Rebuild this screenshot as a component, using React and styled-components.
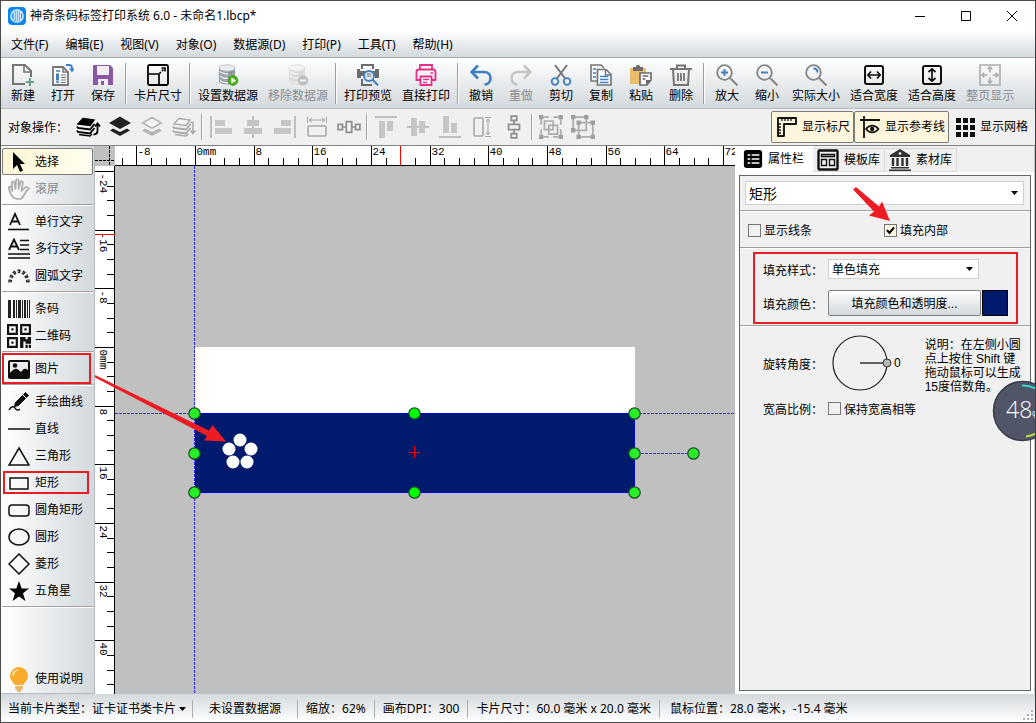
import React, { useLayoutEffect, useRef, useState } from "react";
import styled, { createGlobalStyle } from "styled-components";

const GlobalStyle = createGlobalStyle`
  * { box-sizing: border-box; }
  body {
    margin: 0;
    overflow: hidden;
    background: #5c5c5c;
    font-family: "Noto Sans", "Noto Sans CJK SC", sans-serif;
    font-size: 12px;
    line-height: 16px;
    color: #000;
  }
  button, select, input {
    font-family: inherit;
    font-size: inherit;
    line-height: inherit;
    color: inherit;
  }
`;

const BLUE = "#3f7fbf";
const GREY = "#757575";
const NAVY = "#001b6e";
const RED = "#ed1c24";

// ---------- icons, drawn on a 22 unit grid ----------

const Icon = ({ size = 22, children }) => (
  <svg width={size} height={size} viewBox="0 0 22 22" fill="none" aria-hidden="true">
    {children}
  </svg>
);

const NewIcon = () => (
  <Icon>
    <path d="M13 20H1V1h12l6 6v6" stroke={GREY} strokeWidth="2" />
    <path d="M12 1v7h7" stroke={GREY} strokeWidth="1.6" />
    <path d="M18 14v8M14 18h8" stroke="#6a9f88" strokeWidth="2" />
  </Icon>
);

const OpenIcon = () => (
  <Icon>
    <path d="M1 3h10l5 5v13H1z" fill="#fff" stroke={GREY} strokeWidth="1.8" />
    <path d="M11 3v5h5" stroke={GREY} strokeWidth="1.5" />
    <path d="M4 7h4M4 18h3" stroke={BLUE} strokeWidth="1.5" />
    <path d="M4 9.5h3v7H4z" fill={BLUE} />
    <path d="M9 11h5M9 13.5h5M9 16h5M9 18.5h5" stroke={GREY} strokeWidth="1.2" />
    <path d="M14 1h3c2 0 3 1 3 3v2" stroke={BLUE} strokeWidth="1.8" />
    <path d="M17 4.5h5.5L20 8.5z" fill={BLUE} />
  </Icon>
);

const SaveIcon = () => (
  <Icon>
    <path d="M1 1h17l3 3v17H1z" fill="#8858a0" />
    <path d="M5 2h12v9H5zM6 15h10v6H6z" fill="#f3eef6" />
    <path d="M9 17h3v4H9z" fill="#8858a0" />
  </Icon>
);

const CardSizeIcon = () => (
  <Icon>
    <rect x="1" y="1" width="20" height="20" rx="1.5" stroke="#000" strokeWidth="1.8" />
    <path d="M1 10h11v11" stroke="#000" strokeWidth="1.7" />
    <path d="M12.5 9.500l5-5" stroke="#000" strokeWidth="1.6" strokeDasharray="2 1.4" />
    <path d="M14.5 4h3.500v3.500" stroke="#000" strokeWidth="1.6" />
  </Icon>
);

const DatabaseIcon = ({ remove }) => (
  <Icon>
    <g opacity={remove ? 0.4 : 1}>
      {[13, 8.5, 4].map((y) => (
        <g key={y}>
          <path d={`M2 ${y}v4c0 4.5 16 4.5 16 0v-4`} fill={remove ? "#b8b8b8" : "#8d969d"} />
          <ellipse cx="10" cy={y} rx="8" ry="3.2" fill="#e9edef" stroke="#b0b7bc" strokeWidth=".8" />
        </g>
      ))}
      <path d="M3 7.5c2 2 5 2.6 8 2M3 12c2 2 5 2.6 8 2M3 16.5c2 2 5 2.6 8 2" stroke="#f4f6f7" strokeWidth="1.3" />
      <circle cx="16" cy="16.5" r="5" fill={remove ? "#777" : "#4fae1d"} stroke={remove ? "#999" : "#3b8913"} strokeWidth=".6" />
      {remove ? (
        <path d="M13 16.5h6" stroke="#fff" strokeWidth="2" />
      ) : (
        <path d="M14.4 13.6l4.8 2.9-4.8 2.9z" fill="#fff" />
      )}
    </g>
  </Icon>
);

const PreviewIcon = () => (
  <Icon>
    <path d="M5 5V1h11v4" stroke="#6b6b6b" strokeWidth="2" />
    <path d="M0 5h3v2h15V5h4v9h-4v-2H4v2H0z" fill="#6b6b6b" />
    <path d="M5 15v6h10" stroke="#6b6b6b" strokeWidth="2" />
    <circle cx="12" cy="12" r="5" fill="#dfe9f2" stroke={BLUE} strokeWidth="1.8" />
    <path d="M9.5 12h5M10 10h4" stroke={GREY} strokeWidth="1.2" />
    <path d="M15.6 15.8l5.4 5.4" stroke={BLUE} strokeWidth="2" />
  </Icon>
);

const PrintIcon = () => (
  <Icon>
    <g stroke="#e62e86" strokeWidth="1.8">
      <path d="M5 5.5V1h12v4.5" />
      <path d="M5 16H1.5V8c0-1.5 1-2.5 2.5-2.5h14c1.500 0 2.5 1 2.5 2.5v8H17" />
      <path d="M5.5 12.5h11V21h-11z" fill="#fff" />
      <path d="M8 15.5h6M8 18.5h4M15.5 9H18" strokeWidth="1.5" />
    </g>
  </Icon>
);

const UndoIcon = ({ redo }) => (
  <Icon>
    <g transform={redo ? "translate(22 0) scale(-1 1)" : undefined}>
      <path
        d="M8 1.5L1.5 8 8 14.5M2 8h12c4.5 0 6.5 2.8 6.5 6s-2 6.5-6 6.5"
        stroke={redo ? "#c3c6c8" : BLUE}
        strokeWidth="2.6"
      />
    </g>
  </Icon>
);

const CutIcon = () => (
  <Icon>
    <path d="M5 1l10.5 14M17 1L6.5 15" stroke={GREY} strokeWidth="2" />
    <circle cx="5" cy="17.5" r="3.3" stroke={BLUE} strokeWidth="1.8" />
    <circle cx="17" cy="17.5" r="3.3" stroke={BLUE} strokeWidth="1.8" />
  </Icon>
);

const CopyIcon = () => (
  <Icon>
    <path d="M7 17H1V1h10l3 3" stroke={GREY} strokeWidth="1.6" />
    <path d="M3 5h3M3 9h3M3 13h3" stroke={BLUE} strokeWidth="1.5" />
    <path d="M7.5 5.5H16l5 5V21H7.500z" fill="#fff" stroke={GREY} strokeWidth="1.7" />
    <path d="M15.5 6v5H21" stroke={GREY} strokeWidth="1.5" />
    <path d="M10 12.5h8.5M10 15.5h8.5M10 18.5h8.5" stroke={BLUE} strokeWidth="1.4" />
  </Icon>
);

const PasteIcon = () => (
  <Icon>
    <path d="M0 4h16v16H0z" fill="#e9bd6a" />
    <path d="M3 7V3h3c0-3 4-3 4 0h3v4z" fill="#6b6b6b" />
    <path d="M10 9h11v7l-4 5h-7z" fill="#fff" stroke="#6b6b6b" strokeWidth="1.7" />
    <path d="M12.5 12h6M12.5 15h3" stroke="#6b6b6b" strokeWidth="1.5" />
    <path d="M16 21v-5h5z" fill="#6b6b6b" />
  </Icon>
);

const DeleteIcon = () => (
  <Icon>
    <g stroke={GREY} strokeWidth="2">
      <path d="M0 5h22M7 5V1.5h8V5M3 5l1 16h14l1-16" />
      <path d="M8 9v8M11 9v8M14 9v8" strokeWidth="1.8" />
    </g>
  </Icon>
);

const ZoomIcon = ({ kind }) => (
  <Icon>
    <circle cx="8.5" cy="8.5" r="7.3" stroke="#858585" strokeWidth="1.8" />
    <path d="M14 14l7.5 7.5" stroke="#858585" strokeWidth="2" />
    {kind === "in" && <path d="M8.5 5v7M5 8.5h7" stroke={BLUE} strokeWidth="2" />}
    {kind === "out" && <path d="M5 8.5h7" stroke={BLUE} strokeWidth="2" />}
    {kind === "actual" && <path d="M8.5 4.5c2.5 0 4 1.800 4 4" stroke={BLUE} strokeWidth="2" />}
  </Icon>
);

const FitIcon = ({ tall }) => (
  <Icon>
    <rect x="2" y="2" width="18" height="18" rx="2" stroke="#111" strokeWidth="2" />
    <path
      d="M5 11h12M8 7.5L4.8 11 8 14.5M14 7.5l3.2 3.5-3.2 3.5"
      stroke="#111"
      strokeWidth="1.7"
      transform={tall ? "rotate(90 11 11)" : undefined}
    />
  </Icon>
);

const FullPageIcon = () => (
  <Icon>
    <g stroke="#a9adb0" strokeWidth="1.6">
      <path d="M1 1h20v20H1z" />
      {[0, 90, 180, 270].map((a) => (
        <path key={a} d="M11 8.5V3M8.800 5.200L11 3l2.200 2.200" transform={`rotate(${a} 11 11)`} />
      ))}
    </g>
  </Icon>
);

const Sheets = ({ top, bottom, children }) => (
  <Icon>
    <path d="M1 14.5l10 5.5 10-5.5-3-2-7 3.6-7-3.6z" fill={bottom} />
    <path d="M11 1.5L20.5 7 11 12.2 1.5 7z" fill={top} stroke={bottom} strokeWidth="1.6" />
    {children}
  </Icon>
);

const StackIcon = ({ color, down }) => (
  <svg width="26" height="22" viewBox="0 0 26 22" fill="none" aria-hidden="true">
    <path d="M8 2.5l11 1.5-4 5.500L3 8z" fill={down ? "#f4f4f4" : color} stroke={color} strokeWidth="1.5" />
    <path d="M2 10.500l1 1.500 12 1.500 4.500-5.500M2 14.500l1 1.500 12 1.500 4.500-5.500" stroke={color} strokeWidth="1.8" />
    <path d="M4 18.500l11 1.500 2-2" stroke={color} strokeWidth="1.4" />
    {down ? (
      <path d="M19.500 6.500h2.500V17M19.500 14.500l2.500 3 2.500-3" stroke={color} strokeWidth="1.6" />
    ) : (
      <path d="M18.500 18.500c3 0 4-1 4-4V8M20 10.500l2.500-3 2.500 3" stroke={color} strokeWidth="1.8" />
    )}
  </svg>
);

const AlignShape = ({ kind }) => {
  const shapes = {
    left: <path d="M5 4h10v6H5zM5 12h17v6H5z" />,
    center: <path d="M5 4h12v6H5zM2 12h18v6H2z" />,
    right: <path d="M7 4h10v6H7zM0 12h17v6H0z" />,
  };
  const line = { left: 1, center: 11, right: 21 };
  return (
    <>
      <path d={`M${line[kind]} 0v22`} stroke="#b9b9b9" strokeWidth="1.8" />
      <g fill="#c6c6c6">{shapes[kind]}</g>
    </>
  );
};

const AlignH = ({ kind }) => (
  <Icon>
    <AlignShape kind={kind} />
  </Icon>
);

// mirrored on the diagonal: left becomes top, long bar first
const AlignV = ({ kind }) => (
  <Icon>
    <g transform="matrix(0 1 -1 0 22 0)">
      <AlignShape kind={kind} />
    </g>
  </Icon>
);

const SameSizeIcon = ({ tall }) => (
  <Icon>
    <g stroke="#a8a8a8" strokeWidth="1.6" transform={tall ? "matrix(0 1 1 0 0 0)" : undefined}>
      <rect x="2" y={tall ? 3 : 10} width="18" height={tall ? 9 : 10} rx="1" />
      <path
        d="M3 4h16M6 2L3 4l3 2M16 2l3 2-3 2M1.500 1v6M20.500 1v6"
        strokeWidth="1"
        transform={tall ? "translate(0 13)" : undefined}
      />
    </g>
  </Icon>
);

const SpreadIcon = ({ tall }) => (
  <Icon size={24}>
    <g stroke="#8f8f8f" strokeWidth="1.6" transform={tall ? "rotate(90 11 11)" : undefined}>
      <path d="M1 8.5h4v5H1zM8.5 6h5v10h-5zM17 8.5h4v5h-4zM5 11h3.5M13.5 11H17" />
    </g>
  </Icon>
);

const GroupIcon = ({ ungroup }) => (
  <Icon size={24}>
    <g stroke="#adadad" strokeWidth="1.6">
      {ungroup ? (
        <path d="M2 2h12v12H2zM7 7h13v13H7z" />
      ) : (
        <path d="M4 2h5M13 2h5M4 20h5M13 20h5M2 4v5M2 13v5M20 4v5M20 13v5M5 5.500h8v8H5zM9 9.500h8v8H9z" />
      )}
    </g>
    <g fill="#9f9f9f">
      {ungroup ? (
        <path d="M0 0h4v4H0zM12 0h4v4h-4zM0 12h4v4H0zM5 5h4v4H5zM18 5h4v4h-4zM5 18h4v4H5zM18 18h4v4h-4z" />
      ) : (
        <path d="M0 0h4v4H0zM18 0h4v4h-4zM0 18h4v4H0zM18 18h4v4h-4z" />
      )}
    </g>
  </Icon>
);

const RulerIcon = () => (
  <Icon>
    <path d="M2 2h18v6H8v12H2z" stroke="#111" strokeWidth="1.9" strokeLinejoin="round" />
    <path d="M6 2v3M9 2v3M12 2v3M15 2v3M2 8h3M2 11h3M2 14h3M2 17h3" stroke="#111" strokeWidth="1.3" />
  </Icon>
);

const GuideIcon = () => (
  <Icon>
    <path d="M1 4h20M5 0v22" stroke="#111" strokeWidth="1.8" />
    <path d="M7 13c3.5-4.5 9-4.5 12.5 0-3.5 4.5-9 4.5-12.5 0z" stroke="#111" strokeWidth="1.7" />
    <circle cx="13.2" cy="13" r="2.2" fill="#111" />
  </Icon>
);

const GridIcon = () => (
  <Icon>
    <path
      d="M2 2h5v5H2zM9 2h5v5H9zM16 2h5v5h-5zM2 9h5v5H2zM9 9h5v5H9zM16 9h5v5h-5zM2 16h5v5H2zM9 16h5v5H9zM16 16h5v5h-5z"
      fill="#111"
    />
  </Icon>
);

const CursorIcon = () => (
  <Icon>
    <path d="M5 1v17l4-4 3 7 3-1.5-3-6.500h5z" fill="#000" />
  </Icon>
);

const HandIcon = () => (
  <Icon>
    <path
      d="M6 20C3 17.5 1.5 14 .8 9.5c.8-1.3 2-1 2.5.5L4.5 13 3.8 4.5c.3-1.6 2.2-1.6 2.5 0L7.5 11 8 2.500c.3-1.700 2.300-1.700 2.600 0V11l1.800-7c.5-1.500 2.400-1.200 2.400.5L13.500 13l3.500-3.500c1.500-.8 3 0 4 1-3 2-4 5-5.500 7.500-1 2-2 3-4.500 3s-3.500 0-5-1z"
      stroke="#a9adb0"
      strokeWidth="1.7"
      strokeLinejoin="round"
    />
  </Icon>
);

const TextIcon = ({ multi }) => (
  <Icon>
    <path
      d={multi ? "M1 12L6 1.5 11 12M3 8.5h6" : "M2 14L7 3l5 11M4 10.500h6"}
      stroke="#111"
      strokeWidth="1.8"
    />
    <path
      d={multi ? "M12 2.5h9M12 7h9M12 11.5h9M0 16h22M0 20h22" : "M0 18.5h21"}
      stroke="#111"
      strokeWidth="1.6"
    />
  </Icon>
);

const ArcTextIcon = () => (
  <Icon>
    <path d="M2 17.500C3 2.500 19 2.500 20 17.500" stroke="#222" strokeWidth="3.6" strokeDasharray="2.800 2" />
    <path d="M2 17.500C3 2.500 19 2.500 20 17.500" stroke="#e4e8ea" strokeWidth="1" strokeDasharray="1.200 3.600" />
  </Icon>
);

const BarcodeIcon = () => (
  <Icon>
    <path
      d="M0 2h3v18H0zM5 2h2v18H5zM8 2h1v18H8zM10 2h3v18h-3zM14 2h1v18h-1zM16 2h2v18h-2zM19 2h1v18h-1zM21 2h1v18h-1z"
      fill="#222"
    />
  </Icon>
);

const QrIcon = () => (
  <Icon size={24}>
    <path d="M1 1h8v8H1zM13 1h8v8h-8zM1 13h8v8H1z" stroke="#111" strokeWidth="2" />
    <path
      d="M4 4h2v2H4zM16 4h2v2h-2zM4 16h2v2H4zM12 12h5v2h2v-2h3v6h-5v-2h-2v6h-3zM17 19h2v3h-2zM20 19h2v3h-2z"
      fill="#111"
    />
  </Icon>
);

const PictureIcon = () => (
  <Icon>
    <rect x="0" y="2" width="22" height="19" rx="2" fill="#0d0d0d" />
    <path d="M2 4h18v8c-4-3-5 0-7 2-2-1-3-4-6-3-2 .5-3 2-5 4z" fill="#e9ebec" />
    <circle cx="7" cy="7.5" r="2.3" fill="#0d0d0d" />
  </Icon>
);

const PenIcon = () => (
  <Icon>
    <path d="M17.5 1.500l3 3-2 2-3-3zM14.500 4.500l3 3-7 7-4 1 1-4z" fill="#111" stroke="#111" />
    <path d="M1 19c2-4 5-4 6-2s3 3 5 1" stroke="#111" strokeWidth="1.5" />
  </Icon>
);

const Outline = ({ d }) => (
  <Icon>
    <path d={d} stroke="#111" strokeWidth="1.5" />
  </Icon>
);

const StarIcon = () => (
  <Icon>
    <path d="M11 1l2.7 7.5H21l-6 4.7 2.4 7.8L11 16.4 4.6 21 7 13.2 1 8.5h7.3z" fill="#000" />
  </Icon>
);

const BulbIcon = () => (
  <svg width="22" height="26" viewBox="0 0 22 26" fill="none" aria-hidden="true">
    <path d="M11 1a9 9 0 0 0-9 9c0 4 3 6 5 9h8c2-3 5-5 5-9a9 9 0 0 0-9-9z" fill="#f9ac2b" />
    <path d="M5 10c0-3 2-5.5 5-6" stroke="#fff" strokeWidth="1.2" />
    <path d="M7 21h8M7.5 23h7M9 25h4" stroke="#e9a23a" strokeWidth="1.5" />
  </svg>
);

const PropsIcon = () => (
  <Icon size={20}>
    <rect x="1" y="1" width="20" height="20" rx="3" fill="#000" />
    <path d="M5 6.5h3M5 11h3M5 15.5h3M9.5 6.5H18M9.5 11H18M9.5 15.5H18" stroke="#fff" strokeWidth="1.7" />
  </Icon>
);

const TemplateIcon = () => (
  <Icon>
    <rect x="1.5" y="1.5" width="19" height="19" rx="1" stroke="#111" strokeWidth="2.4" />
    <path d="M4.5 5.5h13v2h-13zM4.5 10.5h5v6h-5zM12.5 10.5h5v6h-5z" stroke="#111" strokeWidth="1.4" />
  </Icon>
);

const LibraryIcon = () => (
  <Icon>
    <path d="M11 0l10 6v2H1V6zM2 18h18v1.5H2zM0 20.5h22V22H0z" fill="#333" />
    <path d="M4 9v8M8.5 9v8M13.5 9v8M18 9v8" stroke="#333" strokeWidth="2.4" />
    <circle cx="11" cy="4.5" r="1.3" fill="#fff" />
  </Icon>
);

// ---------- layout pieces ----------

const Window = styled.div`
  position: relative;
  display: flex;
  flex-direction: column;
  height: 100vh;
  overflow: hidden;
  border: 1px solid #4a4d48;
  border-right-color: #3a3c38;
  background: #f0f0f0;
`;

const TitleBar = styled.header`
  display: flex;
  align-items: center;
  height: 30px;
  flex: none;
  padding-left: 7px;
  background: #fff;
`;

const Title = styled.h1`
  flex: 1;
  margin: 0 0 0 4px;
  font-size: 12px;
  font-weight: 400;
  white-space: nowrap;
`;

const WindowButton = styled.button`
  display: flex;
  align-items: center;
  justify-content: center;
  width: 46px;
  height: 28px;
  border: 0;
  padding: 0;
  background: none;
`;

const MenuBar = styled.nav`
  display: flex;
  flex: none;
  height: 27px;
  border-bottom: 1px solid #a6abae;
  background: linear-gradient(#fff, #d3d9dd);
`;

const MenuButton = styled.button`
  border: 0;
  padding: 2px 7px 0 10px;
  background: none;
  white-space: nowrap;
`;

const ToolBar = styled.div`
  display: flex;
  flex: none;
  height: 51px;
  padding-left: 2px;
  border-bottom: 1px solid #b6babd;
  background: linear-gradient(#fff, #d3d9dd);
`;

const ToolButton = styled.button`
  display: flex;
  flex-direction: column;
  align-items: center;
  flex: none;
  gap: 2px;
  min-width: 40px;
  border: 0;
  padding: 6px 5px 0;
  background: none;
  white-space: nowrap;

  &:disabled {
    color: #8a8d8f;
  }
`;

const Divider = styled.span`
  flex: none;
  width: 2px;
  margin: ${(p) => p.$margin};
  border-left: 1px solid #a0a0a0;
  border-right: 1px solid #fff;
`;

const ObjectBar = styled.div`
  display: flex;
  flex: none;
  height: 37px;
  padding-left: 7px;
  border-bottom: 1px solid #828282;
`;

const BarLabel = styled.span`
  align-self: center;
  width: 64px;
  padding-top: 2px;
  white-space: nowrap;
`;

const ObjectButton = styled.button`
  display: flex;
  align-items: center;
  justify-content: center;
  width: 32px;
  border: 0;
  padding: 0;
  background: none;
`;

const ViewToggles = styled.div`
  display: flex;
  margin-left: auto;
  padding: 2px 3px 2px 0;
`;

const ToggleButton = styled.button`
  display: flex;
  align-items: center;
  gap: 4px;
  height: 32px;
  border: 1px solid ${(p) => (p.$on ? "#7b7b78" : "transparent")};
  border-radius: 2px;
  padding: 0 3px 0 4px;
  background: ${(p) => (p.$on ? "#fdf6dc" : "none")};
  white-space: nowrap;
`;

const Body = styled.main`
  display: flex;
  flex: 1;
  min-height: 0;
`;

const SideTools = styled.aside`
  display: flex;
  flex-direction: column;
  flex: none;
  width: 94px;
  padding: 2px 1px 1px 1px;
  border-right: 1px solid #b6babd;
  border-bottom: 1px solid #b6babd;
  background: linear-gradient(90deg, #fff, #d3d9dd);
`;

const SideButton = styled.button`
  position: relative;
  display: flex;
  align-items: center;
  gap: 4px;
  flex: none;
  height: 27px;
  border: 1px solid ${(p) => (p.$on ? "#7b7b78" : "transparent")};
  border-radius: 2px;
  padding: 0 0 0 4px;
  background: ${(p) => (p.$on ? "linear-gradient(90deg, #fef6d4, #fffdf0)" : "none")};
  white-space: nowrap;

  &:disabled {
    color: #8a8d8f;
  }
`;

const IconSlot = styled.span`
  display: flex;
  justify-content: center;
  width: 24px;
`;

const SideDivider = styled.span`
  flex: none;
  height: 2px;
  margin: 2px 0;
  border-top: 1px solid #a0a0a0;
  border-bottom: 1px solid #fff;
`;

const Spacer = styled.div`
  flex: 1;
`;

const Marker = styled.span`
  position: absolute;
  inset: ${(p) => p.$inset};
  border: 2px solid ${RED};
  pointer-events: none;
`;

const Stage = styled.section`
  display: grid;
  grid-template: 20px 1fr / 20px 1fr;
  flex: 1;
  min-width: 0;
  overflow: hidden;
  background: #c0c0c0;
`;

const RulerSvg = styled.svg`
  display: block;
  width: 100%;
  height: 100%;
  background: ${(p) => p.$bg || "#fff"};
  font-family: "Liberation Mono", monospace;
  font-size: 11px;
`;

const Board = styled.div`
  position: relative;
  overflow: hidden;
`;

const BoardDrawing = styled.svg`
  position: absolute;
  inset: 0;
  width: 100%;
  height: 100%;
`;

const SidePanel = styled.aside`
  display: flex;
  flex-direction: column;
  flex: none;
  width: 300px;
  padding: 0 3px 3px 4px;
  border-right: 1px solid #c4c4c4;
  background: #fff;
`;

const Tabs = styled.div`
  display: flex;
  align-items: flex-end;
  margin: 0 -3px 0 -4px;
  height: 26px;
  flex: none;
  background: #f0f0f0;
`;

const Tab = styled.button`
  display: flex;
  align-items: center;
  gap: 5px;
  height: ${(p) => (p.$on ? 26 : 24)}px;
  border: solid #d9d9d9;
  border-width: ${(p) => (p.$on ? "0" : "1px 1px 1px 0")};
  padding: 0 ${(p) => (p.$on ? 9 : 4)}px 0 ${(p) => (p.$on ? 8 : 4)}px;
  background: ${(p) => (p.$on ? "#fff" : "#f0f0f0")};
  white-space: nowrap;
`;

const Properties = styled.div`
  flex: 1;
  margin-top: 3px;
  border: 1px solid #666;
  background: #f0f0f0;
  font-family: "Liberation Sans", "Noto Sans CJK SC", sans-serif;
`;

const Section = styled.section`
  position: relative;
  display: grid;
  gap: ${(p) => p.$gap || 0}px;
  padding: ${(p) => p.$pad};
  border-bottom: ${(p) => (p.$last ? "0" : "1px solid #a0a0a0")};
  box-shadow: ${(p) => (p.$last ? "none" : "0 1px #fff")};
`;

const Row = styled.div`
  display: flex;
  align-items: center;
`;

const FieldLabel = styled.label`
  flex: none;
  width: 65px;
  padding-top: 3px;
  white-space: nowrap;
`;

const SelectBox = styled.span`
  display: grid;
  align-items: center;
  width: ${(p) => (p.$wide ? "100%" : "151px")};
  font-size: ${(p) => (p.$wide ? 14 : 12)}px;

  select {
    grid-area: 1 / 1;
    width: 100%;
    height: ${(p) => (p.$wide ? 24 : 20)}px;
    appearance: none;
    border: 1px solid #d0d0d0;
    border-radius: 0;
    padding: 2px 3px 0;
    background: #fff;
  }

  svg {
    grid-area: 1 / 1;
    justify-self: end;
    margin-right: 6px;
    pointer-events: none;
  }
`;

const CheckLabel = styled.label`
  display: grid;
  grid-template-columns: 13px auto;
  align-items: center;
  gap: 3px;
  width: ${(p) => p.$width || "auto"};
  white-space: nowrap;

  input {
    grid-area: 1 / 1;
    width: 13px;
    height: 13px;
    margin: 0;
    appearance: none;
    border: 1px solid #777;
    background: #f0f0f0;
  }

  input:checked {
    background: #fef6dc;
  }

  svg {
    grid-area: 1 / 1;
    pointer-events: none;
  }
`;

const CheckText = styled.span`
  padding-top: 2px;
`;

const ColorButton = styled.button`
  width: 153px;
  height: 26px;
  border: 1px solid #7d8286;
  border-radius: 2px;
  padding: 2px 0 0;
  background: linear-gradient(#fdfdfd, #d3d9dd);
`;

const Swatch = styled.button`
  width: 26px;
  height: 26px;
  margin-left: 1px;
  border: 1px solid #000;
  padding: 0;
  background: ${NAVY};
`;

const Hint = styled.p`
  margin: 0 0 0 24px;
  padding-top: 6px;
  line-height: 14px;
  white-space: nowrap;
`;

const StatusBar = styled.footer`
  display: flex;
  align-items: center;
  flex: none;
  height: 28px;
  padding: 2px 0 0 7px;
  background: linear-gradient(#d3d9dd, #fff);
  white-space: nowrap;
`;

const StatusItem = styled.span`
  padding: 0 ${(p) => p.$pad || 8}px;
`;

const StatusLine = styled.span`
  width: 1px;
  height: 18px;
  background: #aaafb2;
`;

const TypeButton = styled.button`
  display: flex;
  align-items: center;
  gap: 3px;
  border: 0;
  padding: 0 6px 0 0;
  background: none;
`;

const Grip = styled.svg`
  align-self: flex-end;
  margin-left: auto;
  width: 12px;
  height: 12px;
`;

const Annotation = styled.svg`
  position: absolute;
  top: -1px;
  left: -1px;
  width: 280px;
  height: 460px;
  pointer-events: none;
`;

const PanelArrow = styled.svg`
  position: absolute;
  top: -25px;
  left: 110px;
  pointer-events: none;
`;

const SpeedBall = styled.svg`
  position: absolute;
  top: 379px;
  right: -19px;
`;

// ---------- data ----------

const menus = ["文件(F)", "编辑(E)", "视图(V)", "对象(O)", "数据源(D)", "打印(P)", "工具(T)", "帮助(H)"];

const toolGroups = [
  [
    ["新建", <NewIcon />],
    ["打开", <OpenIcon />],
    ["保存", <SaveIcon />],
  ],
  [["卡片尺寸", <CardSizeIcon />]],
  [
    ["设置数据源", <DatabaseIcon />],
    ["移除数据源", <DatabaseIcon remove />, true],
  ],
  [
    ["打印预览", <PreviewIcon />],
    ["直接打印", <PrintIcon />],
  ],
  [
    ["撤销", <UndoIcon />],
    ["重做", <UndoIcon redo />, true],
    ["剪切", <CutIcon />],
    ["复制", <CopyIcon />],
    ["粘贴", <PasteIcon />],
    ["删除", <DeleteIcon />],
  ],
  [
    ["放大", <ZoomIcon kind="in" />],
    ["缩小", <ZoomIcon kind="out" />],
    ["实际大小", <ZoomIcon kind="actual" />],
    ["适合宽度", <FitIcon />],
    ["适合高度", <FitIcon tall />],
    ["整页显示", <FullPageIcon />, true],
  ],
];

const objectGroups = [
  [
    ["置于顶层", <StackIcon color="#000" />],
    ["上移一层", <Sheets top="#222" bottom="#222" />],
    ["下移一层", <Sheets top="#f4f4f4" bottom="#b5b5b5" />],
    ["置于底层", <StackIcon color="#ababab" down />],
  ],
  [
    ["左对齐", <AlignH kind="left" />],
    ["水平居中", <AlignH kind="center" />],
    ["右对齐", <AlignH kind="right" />],
    ["等宽", <SameSizeIcon />],
    ["水平分布", <SpreadIcon />],
  ],
  [
    ["顶对齐", <AlignV kind="left" />],
    ["垂直居中", <AlignV kind="center" />],
    ["底对齐", <AlignV kind="right" />],
    ["等高", <SameSizeIcon tall />],
    ["垂直分布", <SpreadIcon tall />],
  ],
  [
    ["组合", <GroupIcon />],
    ["取消组合", <GroupIcon ungroup />],
  ],
];

const sideGroups = [
  [
    ["选择", <CursorIcon />],
    ["滚屏", <HandIcon />],
  ],
  [
    ["单行文字", <TextIcon />],
    ["多行文字", <TextIcon multi />],
    ["圆弧文字", <ArcTextIcon />],
  ],
  [
    ["条码", <BarcodeIcon />],
    ["二维码", <QrIcon />],
  ],
  [["图片", <PictureIcon />]],
  [
    ["手绘曲线", <PenIcon />],
    ["直线", <Outline d="M0 11h22" />],
    ["三角形", <Outline d="M11 3l10 17H1z" />],
    ["矩形", <Outline d="M2 6h18v11H2z" />],
    ["圆角矩形", <Outline d="M4 6h14q3 0 3 3v5q0 3-3 3H4q-3 0-3-3V9q0-3 3-3z" />],
    ["圆形", <Outline d="M1 11a10 8 0 0 1 20 0a10 8 0 0 1-20 0z" />],
    ["菱形", <Outline d="M11 1l10 10-10 10L1 11z" />],
    ["五角星", <StarIcon />],
  ],
];

const markers = { 图片: "-3px 1px -3px -1px", 矩形: "1px 3px 1px 0" };

// ---------- rulers ----------

const PX_PER_MM = 22 / 3;

const ticks = (origin, from, length) => {
  const list = [];
  for (let mm = from; origin + mm * PX_PER_MM < length; mm += 2) {
    list.push({ mm, pos: Math.round(origin + mm * PX_PER_MM) + 0.5, major: mm % 8 === 0 });
  }
  return list;
};

const tickText = (mm) => (mm === 0 ? "0mm" : String(mm));

// width and height of an element, kept up to date
const useBox = () => {
  const ref = useRef(null);
  const [box, setBox] = useState({ width: 0, height: 0 });

  useLayoutEffect(() => {
    const measure = () => {
      const { width, height } = ref.current.getBoundingClientRect();
      setBox({ width, height });
    };
    measure();
    window.addEventListener("resize", measure);
    return () => window.removeEventListener("resize", measure);
  }, []);

  return [ref, box];
};

const TopRuler = () => {
  const [ref, { width }] = useBox();
  return (
    <RulerSvg ref={ref}>
      {ticks(80, -10, width).map(({ mm, pos, major }) => (
        <g key={mm}>
          <path d={`M${pos} ${major ? 0 : 12}V20`} stroke="#000" />
          {major && <text x={pos + 1} y="9">{tickText(mm)}</text>}
        </g>
      ))}
      <path d={`M0 19.5H${width}`} stroke="#000" />
      <path d="M285.5 0v19" stroke="#f00" />
    </RulerSvg>
  );
};

const LeftRuler = () => {
  const [ref, { height }] = useBox();
  return (
    <RulerSvg ref={ref}>
      {ticks(181, -24, height).map(({ mm, pos, major }) => (
        <g key={mm}>
          <path d={`M${major ? 0 : 12} ${pos}H20`} stroke="#000" />
          {major && (
            <text transform={`translate(5 ${pos + 2}) rotate(90)`}>{tickText(mm)}</text>
          )}
        </g>
      ))}
      <path d={`M19.5 0V${height}`} stroke="#000" />
      <path d="M0 68.5h20" stroke="#f00" />
    </RulerSvg>
  );
};

// ---------- card on the board ----------

const handles = [
  [80, 247], [300, 247], [520, 247],
  [80, 287], [520, 287], [579, 287],
  [80, 326], [300, 326], [520, 326],
];

const petals = [[125, 274], [114, 283], [136, 283], [118, 296], [132, 296]];

const CardBoard = () => (
  <Board>
    <BoardDrawing>
      <rect x="80" y="181" width="440" height="146" fill="#fff" />
      <rect x="80" y="247" width="440" height="80" fill={NAVY} />
      {petals.map(([x, y]) => (
        <circle key={`${x}-${y}`} cx={x} cy={y} r="6.5" fill="#fff" />
      ))}
      <path d="M80 247.5h440M519.5 247v79.5H80" fill="none" stroke="#0000f0" />
      <path d="M80 247.5h440M519.5 247v79.5H80" fill="none" stroke={NAVY} strokeDasharray="1 3" />
      <path d="M79.5 0v2000" stroke="#2a2aff" strokeDasharray="3 1" />
      <path d="M0 247.5h80M520 247.5h3000M526 287.5h47" stroke="#3535d0" strokeDasharray="3 1" />
      <path d="M299.5 280v12M293.5 286.5h12" stroke="#f00" />
      {handles.map(([x, y]) => (
        <circle
          key={`${x}-${y}`}
          cx={x - 0.5}
          cy={y + 0.5}
          r="5.7"
          fill={x === 300 ? "#0f0" : "#27ee27"}
          stroke="#1e4a2c"
          strokeWidth="1.2"
        />
      ))}
    </BoardDrawing>
  </Board>
);

const Triangle = () => (
  <svg width="7" height="4" viewBox="0 0 7 4" aria-hidden="true">
    <path d="M0 0h7L3.5 4z" fill="#000" />
  </svg>
);

const Check = ({ label, checked, onChange, width }) => (
  <CheckLabel $width={width}>
    <input type="checkbox" checked={checked} onChange={(e) => onChange(e.target.checked)} />
    {checked && (
      <svg width="13" height="13" viewBox="0 0 13 13" fill="none" aria-hidden="true">
        <path d="M3 6l2.5 3L10 3.5" stroke="#000" strokeWidth="2" />
      </svg>
    )}
    <CheckText>{label}</CheckText>
  </CheckLabel>
);

const PropertyPanel = () => {
  const [shape, setShape] = useState("矩形");
  const [line, setLine] = useState(false);
  const [fill, setFill] = useState(true);
  const [keepRatio, setKeepRatio] = useState(false);

  return (
    <Properties>
      <Section $pad="5px 6px 5px 5px">
        <SelectBox $wide>
          <select aria-label="对象" value={shape} onChange={(e) => setShape(e.target.value)}>
            <option>矩形</option>
            <option>圆形</option>
          </select>
          <Triangle />
        </SelectBox>
      </Section>
      <Section $pad="10px 8px 8px">
        <Row>
          <Check label="显示线条" checked={line} onChange={setLine} width="136px" />
          <Check label="填充内部" checked={fill} onChange={setFill} />
        </Row>
        <PanelArrow width="48" height="40" viewBox="850 186 48 40">
          <path d="M853 189.5L856 187l23 19.500 3-5L890 221l-21-5.500 5-4z" fill={RED} />
        </PanelArrow>
      </Section>
      <Section $pad="11px 8px 9px 23px" $gap={11}>
        <Row>
          <FieldLabel htmlFor="fill-style">填充样式：</FieldLabel>
          <SelectBox>
            <select id="fill-style" defaultValue="单色填充">
              <option>单色填充</option>
              <option>渐变填充</option>
            </select>
            <Triangle />
          </SelectBox>
        </Row>
        <Row>
          <FieldLabel htmlFor="fill-color">填充颜色：</FieldLabel>
          <ColorButton id="fill-color">填充颜色和透明度...</ColorButton>
          <Swatch aria-label="当前颜色" />
        </Row>
        <Marker $inset="4px 12px 1px 13px" />
      </Section>
      <Section $pad="6px 8px 8px 23px" $gap={5} $last>
        <Row>
          <FieldLabel as="span">旋转角度：</FieldLabel>
          <svg width="66" height="58" viewBox="0 0 66 58" fill="none" aria-hidden="true">
            <circle cx="32" cy="29" r="27" stroke="#222" strokeWidth="1.2" />
            <path d="M32 29h23" stroke="#000" strokeWidth="1.2" />
            <circle cx="59" cy="29" r="4" fill="#b4b4b4" stroke="#333" />
          </svg>
          <span>0</span>
          <Hint>
            说明：在左侧小圆<br />点上按住 Shift 键<br />拖动鼠标可以生成<br />15度倍数角。
          </Hint>
        </Row>
        <Row>
          <FieldLabel as="span">宽高比例：</FieldLabel>
          <Check label="保持宽高相等" checked={keepRatio} onChange={setKeepRatio} />
        </Row>
      </Section>
    </Properties>
  );
};

const App = () => {
  const [tool, setTool] = useState("选择");

  return (
    <Window>
      <GlobalStyle />
      <TitleBar>
        <Icon size={18}>
          <rect width="22" height="22" rx="5" fill="#0a84ee" />
          <circle cx="11" cy="11" r="7.5" fill="#2d97f5" stroke="#fff" strokeWidth="1.5" />
          <path d="M7.5 6v10M10 5v12M12.5 5v12M15 6v10" stroke="#fff" strokeWidth="1.3" />
        </Icon>
        <Title>神奇条码标签打印系统 6.0 - 未命名1.lbcp*</Title>
        <WindowButton aria-label="最小化">
          <svg width="10" height="10"><path d="M0 5.5h10" stroke="#000" /></svg>
        </WindowButton>
        <WindowButton aria-label="最大化">
          <svg width="10" height="10"><path d="M.5.5h9v9h-9z" stroke="#000" fill="none" /></svg>
        </WindowButton>
        <WindowButton aria-label="关闭">
          <svg width="10" height="10"><path d="M0 0l10 10M10 0L0 10" stroke="#000" /></svg>
        </WindowButton>
      </TitleBar>

      <MenuBar>
        {menus.map((name) => (
          <MenuButton key={name}>{name}</MenuButton>
        ))}
      </MenuBar>

      <ToolBar>
        {toolGroups.map((group, i) => (
          <React.Fragment key={i}>
            {i > 0 && <Divider $margin="5px 2px 4px" />}
            {group.map(([name, icon, disabled]) => (
              <ToolButton key={name} disabled={disabled}>
                {icon}
                {name}
              </ToolButton>
            ))}
          </React.Fragment>
        ))}
      </ToolBar>

      <ObjectBar>
        <BarLabel>对象操作：</BarLabel>
        {objectGroups.map((group, i) => (
          <React.Fragment key={i}>
            {i > 0 && <Divider $margin="5px 2px 5px 1px" />}
            {group.map(([name, icon]) => (
              <ObjectButton key={name} aria-label={name}>{icon}</ObjectButton>
            ))}
          </React.Fragment>
        ))}
        <ViewToggles>
          <ToggleButton $on><RulerIcon />显示标尺</ToggleButton>
          <ToggleButton $on><GuideIcon />显示参考线</ToggleButton>
          <ToggleButton><GridIcon />显示网格</ToggleButton>
        </ViewToggles>
      </ObjectBar>

      <Body>
        <SideTools>
          {sideGroups.map((group, i) => (
            <React.Fragment key={i}>
              {i > 0 && <SideDivider />}
              {group.map(([name, icon]) => (
                <SideButton
                  key={name}
                  $on={tool === name}
                  disabled={name === "滚屏"}
                  onClick={() => setTool(name)}
                >
                  <IconSlot>{icon}</IconSlot>
                  {name}
                  {markers[name] && <Marker $inset={markers[name]} />}
                </SideButton>
              ))}
            </React.Fragment>
          ))}
          <SideDivider />
          <Spacer />
          <SideButton>
            <IconSlot><BulbIcon /></IconSlot>
            使用说明
          </SideButton>
        </SideTools>

        <Stage>
          <RulerSvg $bg="#c0c0c0">
            <path d="M14.5 0v20M0 14.5h20" stroke="#000" strokeDasharray="3 1" />
          </RulerSvg>
          <TopRuler />
          <LeftRuler />
          <CardBoard />
        </Stage>

        <SidePanel>
          <Tabs>
            <Tab $on><PropsIcon />属性栏</Tab>
            <Tab><TemplateIcon />模板库</Tab>
            <Tab><LibraryIcon />素材库</Tab>
          </Tabs>
          <PropertyPanel />
        </SidePanel>
      </Body>

      <StatusBar>
        <span>当前卡片类型：</span>
        <TypeButton>证卡证书类卡片<Triangle /></TypeButton>
        <StatusLine />
        <StatusItem $pad={16}>未设置数据源</StatusItem>
        <StatusLine />
        <StatusItem>缩放：62%</StatusItem>
        <StatusLine />
        <StatusItem>画布DPI：300</StatusItem>
        <StatusLine />
        <StatusItem>卡片尺寸：60.0 毫米 x 20.0 毫米</StatusItem>
        <StatusLine />
        <StatusItem $pad={10}>鼠标位置：28.0 毫米，-15.4 毫米</StatusItem>
        <Grip viewBox="0 0 12 12">
          <path d="M8 0h2v2H8zM4 4h2v2H4zM8 4h2v2H8zM0 8h2v2H0zM4 8h2v2H4zM8 8h2v2H8z" fill="#b0b0b0" />
        </Grip>
      </StatusBar>

      <Annotation viewBox="0 0 280 460">
        <path d="M95 375l114 55.500 3.500-5.500L226 441.500l-22-1 3-4.500L95 377.500z" fill={RED} />
      </Annotation>
      <SpeedBall width="62" height="62" viewBox="0 0 62 62" fill="none">
        <circle cx="31" cy="31" r="29.5" fill="#505667" stroke="#3b3f4c" strokeWidth="1.5" />
        <path d="M30 5.500a25.500 25.500 0 0 1 23 12" stroke="#36d6d0" strokeWidth="2" />
        <path d="M34 56.500a25.500 25.500 0 0 0 19-12" stroke="#c3dc4a" strokeWidth="2" />
        <text x="14" y="38" fontSize="23" fontFamily="Open Sans, sans-serif" fontWeight="300" fill="#fff">48</text>
        <text x="40" y="38" fontSize="9" fontFamily="Open Sans, sans-serif" fill="#fff">%</text>
      </SpeedBall>
    </Window>
  );
};

export default App;
